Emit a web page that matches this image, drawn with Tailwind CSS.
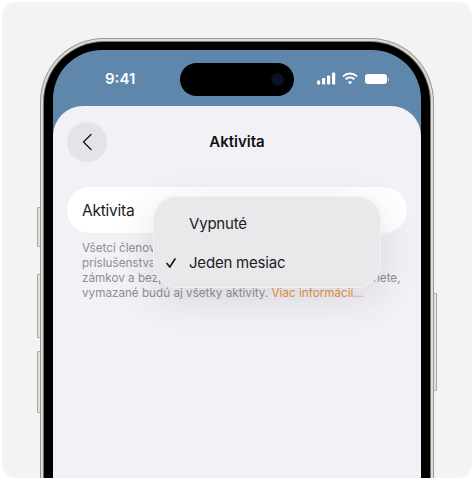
<!DOCTYPE html>
<html lang="sk">
<head>
<meta charset="UTF-8">
<title>Aktivita</title>
<script src="https://cdn.jsdelivr.net/npm/@tailwindcss/browser@4"></script>
</head>
<body class="bg-white">
<div class="w-[474px] h-[480px] overflow-hidden p-[2px] font-['Inter',sans-serif]">
  <div class="h-[476px] rounded-[14px] bg-[#f3f3f3] overflow-hidden pt-[36px] pl-[38px] relative">

    <!-- side buttons -->
    <div class="absolute left-[35px] top-[205px] w-[4px] h-[40px] rounded-l-[1px] border border-[#a8a7a1] bg-[#e2e1dc]"></div>
    <div class="absolute left-[35px] top-[272px] w-[4px] h-[64px] rounded-l-[1px] border border-[#a8a7a1] bg-[#e2e1dc]"></div>
    <div class="absolute left-[35px] top-[349px] w-[4px] h-[62px] rounded-l-[1px] border border-[#a8a7a1] bg-[#e2e1dc]"></div>
    <div class="absolute left-[431px] top-[291px] w-[4px] h-[98px] rounded-r-[1px] border border-[#a8a7a1] bg-[#e2e1dc]"></div>

    <!-- phone frame -->
    <div class="w-[394px] h-[520px] rounded-t-[64px] bg-[#9a9993] p-[1px] relative">
      <div class="h-full rounded-t-[63px] bg-[#dcdbd6] p-[2px]">
        <div class="h-full rounded-t-[61px] bg-[#77766f] pt-[1px] px-[1px]">
          <div class="h-full rounded-t-[60px] bg-black pt-[8px] px-[9px]">

            <!-- screen -->
            <div class="h-[460px] rounded-t-[49px] bg-[#5e87ab] overflow-hidden relative">

              <!-- status bar -->
              <div class="h-[56px] flex items-start relative">
                <span class="absolute left-[52px] top-[20px] text-white text-[15px] leading-[18px] font-semibold">9:41</span>
                <div class="absolute left-[127px] top-[13px] w-[114px] h-[33px] rounded-full bg-black flex items-center justify-end pr-[10px]">
                  <div class="w-[13px] h-[13px] rounded-full bg-[#0d1024]"></div>
                </div>
                <svg class="absolute left-[264px] top-[22px]" width="19" height="13" viewBox="0 0 19 13" fill="#fff">
                  <rect x="0" y="8.5" width="3.2" height="4" rx="1"/>
                  <rect x="5" y="6" width="3.2" height="6.5" rx="1"/>
                  <rect x="10" y="3.5" width="3.2" height="9" rx="1"/>
                  <rect x="15" y="0.5" width="3.2" height="12" rx="1"/>
                </svg>
                <svg class="absolute left-[289px] top-[22px]" width="16" height="13" viewBox="0 0 16 13" fill="none" stroke="#fff" stroke-width="1.9">
                  <path d="M1 4.4 C5 0.6 11 0.6 15 4.4"/>
                  <path d="M3.6 7.2 C6.2 4.8 9.8 4.8 12.4 7.2"/>
                  <path d="M8 12.6 L5.8 10 C7 8.9 9 8.9 10.2 10 Z" fill="#fff" stroke="none"/>
                </svg>
                <div class="absolute left-[312px] top-[24px] flex items-center gap-[1px]">
                  <div class="w-[22px] h-[10px] rounded-[3px] bg-white"></div>
                  <div class="w-[1px] h-[3px] bg-white/60"></div>
                </div>
              </div>

              <!-- sheet -->
              <div class="h-[380px] rounded-t-[30px] bg-[#f1f1f6] px-[14px] pt-[16px] relative">
                <div class="flex items-center h-[40px] relative">
                  <div class="w-[40px] h-[40px] rounded-full bg-[#e3e3e8] flex items-center justify-center">
                    <svg width="12" height="18" viewBox="0 0 12 18" fill="none" stroke="#1c1c1e" stroke-width="1.4" stroke-linecap="round" stroke-linejoin="round"><path d="M10 1.5 L2.5 9 L10 16.5"/></svg>
                  </div>
                  <span class="absolute left-0 right-0 text-center text-[15px] font-semibold text-[#111]">Aktivita</span>
                </div>

                <div class="mt-[25px] h-[46px] pt-[1px] rounded-full bg-white flex items-center px-[15px] text-[15.5px] tracking-[-0.25px] text-[#1c1c1e]">Aktivita</div>

                <div class="mt-[8px] px-[15px] text-[11.7px] leading-[15px] text-[#8e8e93] whitespace-nowrap">
                  <p>Všetci členovia</p>
                  <p>príslušenstva,</p>
                  <p>zámkov a bezpečnostných systémov. Ak aktivitu vypnete,</p>
                  <p>vymazané budú aj všetky aktivity. <span class="text-[#e8913a]">Viac informácií...</span></p>
                </div>

                <!-- popup menu -->
                <div class="absolute left-[100px] top-[90px] w-[228px] h-[92px] rounded-[24px] border border-white/40 bg-[#e9e9ec] shadow-[0_10px_40px_rgba(60,60,80,0.14)] text-[15px] tracking-[-0.2px] text-[#1c1c1e]">
                  <div class="h-[54px] flex items-center pl-[35px]">Vypnuté</div>
                  <div class="h-[22px] mt-[1px] flex items-center pl-[11px] gap-[12px]">
                    <svg width="12" height="12" viewBox="0 0 12 12" fill="none" stroke="#1c1c1e" stroke-width="1.7" stroke-linecap="round" stroke-linejoin="round"><path d="M2 6.5 L4.8 10 L10 2"/></svg>
                    <span>Jeden mesiac</span>
                  </div>
                </div>
              </div>

            </div>
          </div>
        </div>
      </div>
    </div>

  </div>
</div>
</body>
</html>
